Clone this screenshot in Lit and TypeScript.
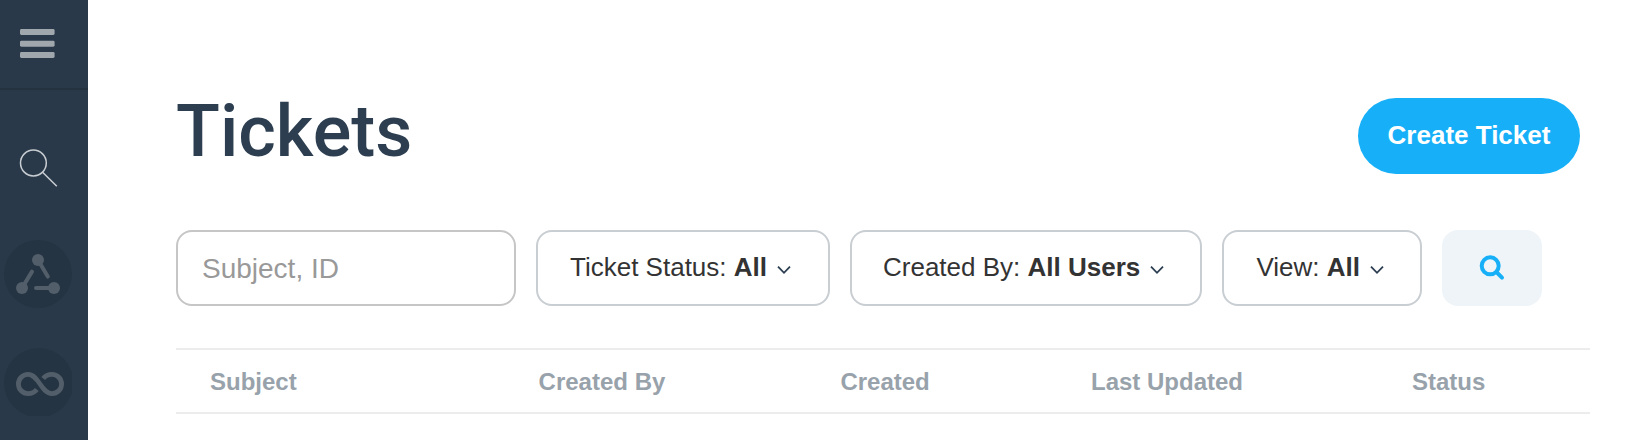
import { LitElement, html, css } from "lit";
import { customElement, property } from "lit/decorators.js";

@customElement("nav-rail")
class NavRail extends LitElement {
  static styles = css`
    :host { display: flex; flex-direction: column; width: 88px; flex: none; background: #2a3949; }
    svg { display: block; }
    .menu { height: 88px; box-sizing: border-box; padding: 29px 0 0 20px; flex: none; }
    .items { border-top: 2px solid #243240; padding: 58px 0 0 4px; }
    .search { margin-left: 14px; }
    .apps { margin-top: 50px; }
    .loop { margin-top: 40px; }
  `;
  render() {
    return html`
      <div class="menu">
        <svg width="36" height="30" viewBox="0 0 36 30" fill="#a0a7ad">
          <rect x="0" y="0" width="34.6" height="6" rx="1.4" />
          <rect x="0" y="11.7" width="34.6" height="6" rx="1.4" />
          <rect x="0" y="23" width="34.6" height="6" rx="1.4" />
        </svg>
      </div>
      <div class="items">
        <svg class="search" width="42" height="42" viewBox="18 148 42 42" fill="none" stroke="#c8cdd2" stroke-width="1.5">
          <circle cx="33.4" cy="163" r="12.9" />
          <path d="M42.6 172.2 56.8 186.3" />
        </svg>
        <svg class="apps" width="68" height="68" viewBox="0 0 68 68">
          <circle cx="34" cy="34" r="34" fill="#253442" />
          <g fill="#525e69">
            <circle cx="34" cy="20" r="6" />
            <circle cx="18" cy="48" r="6" />
            <circle cx="50" cy="48" r="6" />
          </g>
          <g stroke="#525e69" stroke-width="4" stroke-linecap="round">
            <path d="M34 20 43.8 36.6M18 48 28 31.6M50 48H32" />
          </g>
        </svg>
        <svg class="loop" width="68" height="68" viewBox="0 0 68 68">
          <circle cx="34.7" cy="34.7" r="34.7" fill="#253442" />
          <g fill="none" stroke="#525e69" stroke-width="4.8">
            <path d="M32.8 41.4C30.4 44.4 27.6 45.6 24 45.6A9.6 9.6 0 0 1 24 26.4C35 26.4 37 45.6 48 45.6A9.6 9.6 0 0 0 48 26.4C44.4 26.4 41.6 27.6 39.2 30.6" />
          </g>
        </svg>
      </div>
    `;
  }
}

@customElement("filter-select")
class FilterSelect extends LitElement {
  @property() label = "";
  @property() value = "";
  static styles = css`
    :host {
      display: flex; box-sizing: border-box; height: 76px; flex: none; padding-left: 32px;
      border: 2px solid #c9ced3; border-radius: 16px; color: #333; background: #fff;
      font-size: 26px; line-height: 70px; white-space: pre;
    }
    svg { margin: 33px 0 0 9.8px; flex: none; }
  `;
  render() {
    return html`<span>${this.label}: <b>${this.value}</b></span><svg width="14" height="10" viewBox="0 0 14 10" fill="none" stroke="#2b3d50" stroke-width="1.8"><path d="M1 1.6 7 7.8 13 1.6" /></svg>`;
  }
}

@customElement("app-root")
class AppRoot extends LitElement {
  static styles = css`
    :host {
      display: flex; width: 1628px; height: 440px; overflow: hidden; background: #fff;
      font-family: "Liberation Sans", Arial, sans-serif;
    }
    main { flex: 1; padding: 98px 38px 0 88px; }
    header { display: flex; justify-content: space-between; height: 76px; padding-right: 10px; }
    h1 { margin: -8px 0 0; font: 500 72px/84px Roboto, sans-serif; color: #2c3e50; }
    button { font-family: inherit; border: 0; padding: 0; }
    .create { width: 222px; height: 76px; border-radius: 38px; background: #17b0f8; color: #fff; font-size: 26px; font-weight: 700; line-height: 74px; padding-bottom: 2px; }
    .filters { display: flex; gap: 20px; margin-top: 56px; }
    input {
      box-sizing: border-box; width: 340px; height: 76px; padding: 2px 25px 0 24px; border: 2px solid #c6c6c6;
      border-radius: 16px; font: 28px "Liberation Sans", Arial, sans-serif; background: #fff;
    }
    input::placeholder { color: #999; opacity: 1; }
    .status { width: 294px; }
    .author { width: 352px; padding-left: 31px; }
    .view { width: 200px; padding-left: 32.4px; }
    .go { width: 100px; height: 76px; border-radius: 16px; background: #eff4f8; display: flex; justify-content: center; align-items: center; }
    .columns {
      display: grid; grid-template-columns: 328.6px 301.8px 250.6px 321px 1fr; margin-top: 42px; padding-left: 34px;
      border: solid #ececec; border-width: 2px 0; height: 62px; line-height: 64px;
      font-size: 24px; font-weight: 700; color: #98a2ab; white-space: nowrap;
    }
  `;
  render() {
    return html`
      <nav-rail></nav-rail>
      <main>
        <header>
          <h1>Tickets</h1>
          <button class="create">Create Ticket</button>
        </header>
        <div class="filters">
          <input placeholder="Subject, ID" />
          <filter-select class="status" label="Ticket Status" value="All"></filter-select>
          <filter-select class="author" label="Created By" value="All Users"></filter-select>
          <filter-select class="view" label="View" value="All"></filter-select>
          <button class="go" aria-label="Search">
            <svg width="26" height="26" viewBox="0 0 26 26" fill="none" stroke="#17b0f8" stroke-width="4">
              <circle cx="11.2" cy="10.8" r="8.5" />
              <path d="M17.4 17 23 22.6" stroke-linecap="round" />
            </svg>
          </button>
        </div>
        <div class="columns">
          <span>Subject</span><span>Created By</span><span>Created</span><span>Last Updated</span><span>Status</span>
        </div>
      </main>
    `;
  }
}
